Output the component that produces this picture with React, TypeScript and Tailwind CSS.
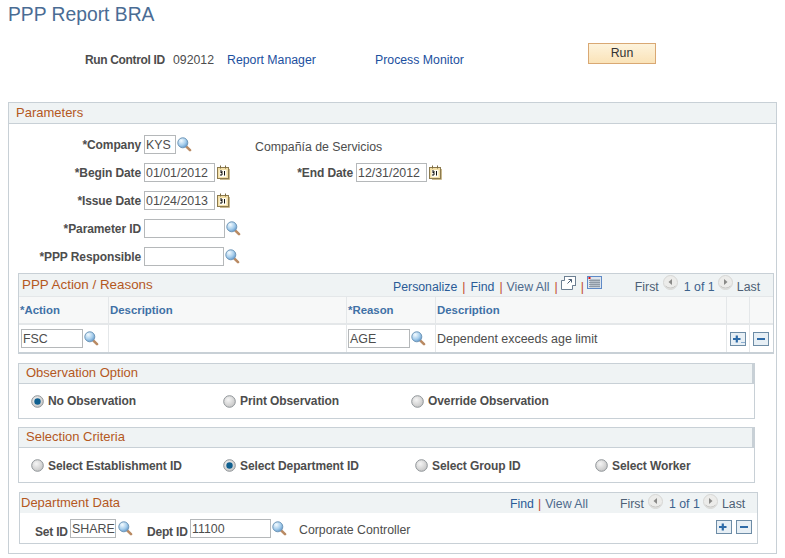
import React from "react";

function Search() {
  return (
    <svg width="15" height="15" viewBox="0 0 15 15" className="shrink-0">
      <defs>
        <radialGradient id="lens" cx="35%" cy="30%" r="75%">
          <stop offset="0%" stopColor="#f4fbff" />
          <stop offset="60%" stopColor="#a5cdec" />
          <stop offset="100%" stopColor="#5f95c8" />
        </radialGradient>
      </defs>
      <path d="M9.400 9.600 L13 13.200" stroke="#b98a63" strokeWidth="2.600" strokeLinecap="round" />
      <circle cx="5.800" cy="5.800" r="5" fill="url(#lens)" stroke="#6f97b8" strokeWidth="1" />
    </svg>
  );
}

function Calendar() {
  return (
    <svg width="13" height="15" viewBox="0 0 13 15" className="shrink-0">
      <rect x="0.500" y="2.500" width="11" height="11" fill="#f3dfa6" stroke="#8c7a4e" />
      <path d="M12.500 4v10.500H3" stroke="#c9b98e" fill="none" />
      <path d="M3.500 0.500v3M8.500 0.500v3" stroke="#7a6a42" />
      <rect x="2.500" y="5" width="7" height="7" fill="#fffdf2" />
      <path d="M3 6h2v1.500H3.500M5 7.500V10H3M7.500 6v4.500" stroke="#111" fill="none" strokeWidth="1" />
    </svg>
  );
}

function Radio({ on = false }: { on?: boolean }) {
  return (
    <svg width="13" height="13" viewBox="0 0 13 13" className="shrink-0">
      <defs>
        <radialGradient id="radioOff" cx="40%" cy="35%" r="70%">
          <stop offset="0%" stopColor="#f5f5f5" />
          <stop offset="100%" stopColor="#c4c4c4" />
        </radialGradient>
      </defs>
      <circle cx="6.500" cy="6.500" r="5.800" fill="url(#radioOff)" stroke="#8f9498" strokeWidth="1" />
      {on && <circle cx="6.500" cy="6.500" r="3.200" fill="#0f5f8f" />}
    </svg>
  );
}

function PlusBtn({ dots = false }: { dots?: boolean }) {
  return (
    <svg width="16" height="14" viewBox="0 0 16 14" className="shrink-0">
      <rect x="0.500" y="0.500" width="15" height="13" fill="#e7eff5" stroke="#6d8ca6" />
      <path d="M3 7h7.500M6.800 3.500v7" stroke="#2e6ba8" strokeWidth="2.200" />
      {dots && <path d="M11.500 10.500h1M13.500 10.500h1" stroke="#2e6ba8" />}
    </svg>
  );
}

function MinusBtn() {
  return (
    <svg width="16" height="14" viewBox="0 0 16 14" className="shrink-0">
      <rect x="0.500" y="0.500" width="15" height="13" fill="#e7eff5" stroke="#6d8ca6" />
      <path d="M4 7h8" stroke="#2e6ba8" strokeWidth="2" />
    </svg>
  );
}

function Nav({ dir }: { dir: "l" | "r" }) {
  return (
    <svg width="15" height="15" viewBox="0 0 15 15" className="shrink-0">
      <circle cx="7.500" cy="7.500" r="7" fill="#ececea" stroke="#d6d6d4" />
      <path d="M2.500 11a7 7 0 0 0 10 0" stroke="#c4c4c2" fill="none" />
      <path d={dir === "l" ? "M9 4v6L5.500 7z" : "M6 4v6L9.500 7z"} fill="#8a8a88" />
    </svg>
  );
}

function Popout() {
  return (
    <svg width="15" height="14" viewBox="0 0 15 14" className="shrink-0">
      <rect x="3.500" y="0.500" width="11" height="9" fill="#fff" stroke="#6c7f92" />
      <path d="M3.500 4.500h-3v9h11v-4" fill="#fff" stroke="#6c7f92" />
      <path d="M6.500 7.500l4-4M7.500 3.500h3v3" stroke="#4a5f75" fill="none" />
    </svg>
  );
}

function GridIcon() {
  return (
    <svg width="15" height="13" viewBox="0 0 15 13" className="shrink-0">
      <rect x="0.500" y="0.500" width="14" height="12" fill="#dfe6ee" stroke="#5f8ac7" />
      <path d="M2 4.500h11M2 6.500h11M2 8.500h11M2 10.500h11M4 3v8.500M6 3v8.500M8 3v8.500M10 3v8.500M12 3v8.500" stroke="#8f9aa6" strokeWidth="1" />
      <rect x="1.500" y="1" width="2" height="2" fill="#e01010" />
    </svg>
  );
}

function Field({ value = "", w }: { value?: string; w: string }) {
  return (
    <div className={`${w} h-[19px] shrink-0 border border-[#b5b8ba] bg-white pl-[1px] text-[12.4px] leading-[18px] whitespace-nowrap text-[#4d4d4d] overflow-hidden`}>
      {value}
    </div>
  );
}

function Label({ children }: { children: React.ReactNode }) {
  return <div className="w-[135px] shrink-0 pr-[3px] text-right text-[12px] font-bold tracking-[-0.1px] text-[#4d4d4d] whitespace-nowrap">{children}</div>;
}

function Sep() {
  return <span className="text-[#c2492f]">|</span>;
}

function Pager({ first, navClass }: { first: string; navClass: string }) {
  return (
    <div className={`flex items-center whitespace-nowrap ${first}`}>
      <span className="w-[24px] text-[#4d5f75]">First</span>
      <span className={`ml-[4px] ${navClass}`}><Nav dir="l" /></span>
      <span className="ml-[6px] w-[29px] text-[#3d628c]">1 of 1</span>
      <span className={`ml-[5px] ${navClass}`}><Nav dir="r" /></span>
      <span className="ml-[4px] text-[#4d5f75]">Last</span>
    </div>
  );
}

function Section({ title, body, children }: { title: string; body: string; children: React.ReactNode }) {
  return (
    <div className="w-[737px] ml-[9px] border border-[#c8d0d6]">
      <div className="h-[20px] border-b border-r-2 border-[#c8d0d6] bg-[#eff3f4] pl-[7px] text-[13px] leading-[18px] text-[#b4581e]">
        {title}
      </div>
      <div className={`flex h-[34px] items-center ${body}`}>{children}</div>
    </div>
  );
}

function Opt({ label, on, className }: { label: string; on?: boolean; className: string }) {
  return (
    <div className={`flex items-center gap-[4px] text-[12px] font-bold tracking-[-0.1px] whitespace-nowrap text-[#4d4d4d] ${className}`}>
      <Radio on={on} />
      <span>{label}</span>
    </div>
  );
}

const th = "flex items-center border-r border-[#e4e7e9] pl-[1px] font-bold text-[11.4px] text-[#3f71a6]";
const td = "flex items-center border-r border-[#e4e7e9]";

export default function App() {
  return (
    <div className="w-[785px] h-[558px] overflow-hidden bg-white text-[12.3px] leading-[14px] text-[#4d4d4d]" style={{ fontFamily: '"Liberation Sans", Arial, sans-serif' }}>
      <h1 className="pl-[8px] pt-[4px] h-[43px] text-[19.3px] leading-[22px] text-[#4a6c94]">PPP Report BRA</h1>

      <div className="flex h-[59px] items-start">
        <div className="ml-[85px] mt-[10px] w-[88px] text-[12px] font-bold tracking-[-0.35px] whitespace-nowrap">Run Control ID</div>
        <div className="mt-[10px] w-[54px]">092012</div>
        <div className="mt-[10px] w-[148px] text-[#1c50a0]">Report Manager</div>
        <div className="mt-[10px] w-[213px] text-[#1c50a0]">Process Monitor</div>
        <div className="h-[21px] w-[68px] border border-[#d9a873] bg-gradient-to-b from-[#fdf3dc] to-[#fae3b8] text-center leading-[18px] text-[#333]">Run</div>
      </div>

      <div className="ml-[8px] h-[452px] w-[769px] border border-t-0 border-[#c8d0d6] flex flex-col items-start">
        <div className="h-[22px] w-full shrink-0 border-y border-[#c8d0d6] bg-[#eff3f4] pl-[7px] text-[13px] leading-[20px] text-[#b4581e]">Parameters</div>

        <div className="mt-[11px] flex h-[19px] w-full items-center">
          <Label>*Company</Label>
          <Field value="KYS" w="w-[32px]" />
          <span className="ml-[1px] -mt-[1px]"><Search /></span>
          <span className="ml-[63px] mt-[4px]">Compañía de Servicios</span>
        </div>
        <div className="mt-[9px] flex h-[19px] w-full items-center">
          <Label>*Begin Date</Label>
          <Field value="01/01/2012" w="w-[71px]" />
          <span className="ml-[2px]"><Calendar /></span>
          <div className="w-[123px] text-right text-[12px] font-bold tracking-[-0.1px] whitespace-nowrap">*End Date</div>
          <span className="ml-[3px]"><Field value="12/31/2012" w="w-[71px]" /></span>
          <span className="ml-[2px]"><Calendar /></span>
        </div>
        <div className="mt-[9px] flex h-[19px] w-full items-center">
          <Label>*Issue Date</Label>
          <Field value="01/24/2013" w="w-[71px]" />
          <span className="ml-[2px]"><Calendar /></span>
        </div>
        <div className="mt-[9px] flex h-[19px] w-full items-center">
          <Label>*Parameter ID</Label>
          <Field w="w-[81px]" />
          <span className="ml-[1px] -mt-[1px]"><Search /></span>
        </div>
        <div className="mt-[9px] flex h-[19px] w-full items-center">
          <Label>*PPP Responsible</Label>
          <Field w="w-[80px]" />
          <span className="ml-[1px] -mt-[1px]"><Search /></span>
        </div>

        <div className="mt-[7px] ml-[9px] w-[756px] border border-b-2 border-[#c8d0d6] bg-[#f7f8f8]">
          <div className="flex h-[23px] items-center border-b border-[#e4e7e9] bg-[#eff3f4] pl-[3px]">
            <span className="w-[371px] text-[13.4px] text-[#b4581e]">PPP Action / Reasons</span>
            <div className="flex items-center gap-[5px] pt-[3px] whitespace-nowrap text-[#2a5b97]">
              <span>Personalize</span><Sep /><span>Find</span><Sep /><span className="-ml-[1px] text-[#4d6a8c]">View All</span><Sep />
              <span className="-ml-[2px] -mt-[8px]"><Popout /></span><Sep />
              <span className="-ml-[2px] -mt-[8px]"><GridIcon /></span>
            </div>
            <div className="pt-[3px]"><Pager first="ml-[33px]" navClass="-mt-[8px]" /></div>
          </div>
          <div className="flex h-[28px] border-b-2 border-[#e4e7e9]">
            <div className={`${th} w-[90px]`}>*Action</div>
            <div className={`${th} w-[238px]`}>Description</div>
            <div className={`${th} w-[89px]`}>*Reason</div>
            <div className={`${th} w-[291px]`}>Description</div>
            <div className={`${th} w-[23px]`} />
            <div className="w-[23px]" />
          </div>
          <div className="flex h-[27px] bg-white">
            <div className={`${td} w-[90px] pl-[2px]`}>
              <Field value="FSC" w="w-[62px]" />
              <span className="ml-[1px]"><Search /></span>
            </div>
            <div className={`${td} w-[238px]`} />
            <div className={`${td} w-[89px] pl-[1px]`}>
              <Field value="AGE" w="w-[62px]" />
              <span className="ml-[1px]"><Search /></span>
            </div>
            <div className={`${td} w-[291px] pl-[1px] text-[12.45px]`}>Dependent exceeds age limit</div>
            <div className={`${td} w-[23px] pl-[3px]`}><PlusBtn dots /></div>
            <div className="flex w-[23px] items-center pl-[3px]"><MinusBtn /></div>
          </div>
        </div>

        <div className="mt-[9px]">
          <Section title="Observation Option" body="">
            <Opt label="No Observation" on className="ml-[12px] w-[192px]" />
            <Opt label="Print Observation" className="w-[188px]" />
            <Opt label="Override Observation" className="" />
          </Section>
        </div>

        <div className="mt-[8px]">
          <Section title="Selection Criteria" body="pt-[1px]">
            <Opt label="Select Establishment ID" className="ml-[12px] w-[192px]" />
            <Opt label="Select Department ID" on className="w-[192px]" />
            <Opt label="Select Group ID" className="w-[180px]" />
            <Opt label="Select Worker" className="" />
          </Section>
        </div>

        <div className="mt-[9px] ml-[10px] w-[739px] border border-[#c8d0d6]">
          <div className="flex h-[20px] items-center bg-[#eff3f4] pl-[1px]">
            <span className="w-[489px] text-[13px] text-[#b4581e]">Department Data</span>
            <div className="flex items-center gap-[4px] pt-[2px] whitespace-nowrap text-[#2a5b97]">
              <span>Find</span><Sep /><span className="text-[#4d6a8c]">View All</span>
            </div>
            <div className="pt-[2px]"><Pager first="ml-[32px]" navClass="-mt-[6px]" /></div>
          </div>
          <div className="flex h-[30px] items-center">
            <span className="ml-[15px] mt-[8px] w-[32px] text-[12px] font-bold tracking-[-0.2px] whitespace-nowrap">Set ID</span>
            <span className="ml-[3px]"><Field value="SHARE" w="w-[46px]" /></span>
            <span className="ml-[2px]"><Search /></span>
            <span className="ml-[14px] mt-[8px] w-[40px] text-[12px] font-bold tracking-[-0.2px] whitespace-nowrap">Dept ID</span>
            <span className="ml-[3px]"><Field value="11100" w="w-[81px]" /></span>
            <span className="ml-[1px]"><Search /></span>
            <span className="ml-[12px] mt-[4px]">Corporate Controller</span>
            <div className="ml-auto mr-[5px] -mt-[2px] flex gap-[4px]"><PlusBtn /><MinusBtn /></div>
          </div>
        </div>
      </div>
    </div>
  );
}
